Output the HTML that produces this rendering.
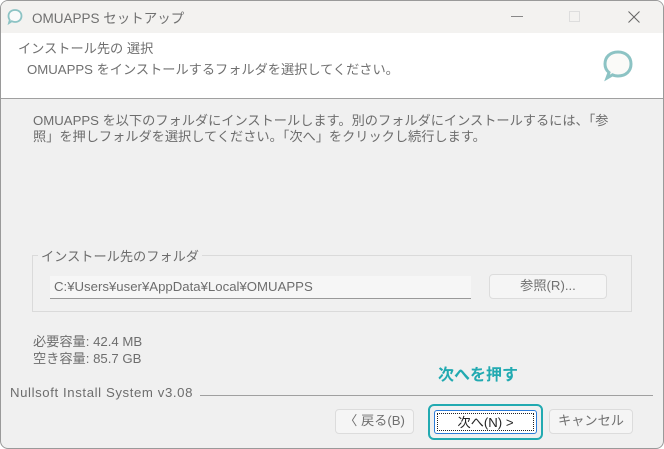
<!DOCTYPE html>
<html><head><meta charset="utf-8"><style>
*{margin:0;padding:0;box-sizing:border-box}
body{width:664px;height:449px;overflow:hidden;background:#fff;font-family:"Liberation Sans","Noto Sans CJK JP",sans-serif;font-size:13.2px;color:#6d6d6d;position:relative}
.win{position:absolute;left:0;top:0;width:664px;height:449px;border:1px solid #9a9a9a;border-radius:8px;overflow:hidden;background:#f0f0f0}
.title{position:absolute;left:0;top:0;width:664px;height:32px;background:#f3f2f0}
.hdr{position:absolute;left:0;top:32px;width:664px;height:66px;background:#fff;border-bottom:1px solid #a0a0a0}
.a{position:absolute;white-space:nowrap}
.btn{position:absolute;background:#f5f5f5;border:1px solid #dcdcdc;border-radius:4px;text-align:center;line-height:22px;color:#707070}
</style></head><body><div class="win">
<div class="title">
<svg class="a" style="left:4px;top:6px" width="20" height="20" viewBox="0 0 20 20"><path d="M10 3c4 0 6.5 2.6 6.5 6s-2.5 6-6.5 6c-1.2 0-2.3-.3-3.3-.8L4 16l.8-3C4 12 3.5 10.6 3.5 9 3.5 5.6 6 3 10 3z" fill="#fafafa" stroke="#8cc3c4" stroke-width="1.8"/></svg>
<div class="a" style="left:31px;top:6px;font-size:13.5px;color:#707070">OMUAPPS セットアップ</div>
<div class="a" style="left:510px;top:15px;width:12px;height:1px;background:#888"></div>
<div class="a" style="left:568px;top:10px;width:11px;height:11px;border:1px solid #ddd"></div>
<svg class="a" style="left:627px;top:10px" width="12" height="12" viewBox="0 0 12 12"><path d="M0.5 0.5L11.5 11.5M11.5 0.5L0.5 11.5" stroke="#666" stroke-width="1"/></svg>
</div>
<div class="hdr">
<div class="a" style="left:17px;top:5px;color:#707070">インストール先の 選択</div>
<div class="a" style="left:26px;top:26px;color:#707070">OMUAPPS をインストールするフォルダを選択してください。</div>
<svg class="a" style="left:597px;top:14px" width="40" height="40" viewBox="0 0 40 40"><path d="M20 5c8 0 13 5 13 12s-5 12-13 12c-2 0-4-.4-5.5-1.2L9 31l2-5.5C8.5 23.5 7 20.5 7 17 7 10 12 5 20 5z" fill="#fafaf8" stroke="#8cc3c4" stroke-width="3"/></svg>
</div>
<div class="a" style="left:32px;top:112px;line-height:16px">OMUAPPS を以下のフォルダにインストールします。別のフォルダにインストールするには、「参<br>照」を押しフォルダを選択してください。「次へ」をクリックし続行します。</div>
<div class="a" style="left:31px;top:254px;width:600px;height:57px;border:1px solid #dadada"></div>
<div class="a" style="left:37px;top:245px;background:#f0f0f0;padding:0 3px">インストール先のフォルダ</div>
<div class="a" style="left:49px;top:275px;width:421px;height:23px;background:#f6f6f6;border-bottom:1px solid #999;padding-left:4px;line-height:21px">C:¥Users¥user¥AppData¥Local¥OMUAPPS</div>
<div class="btn" style="left:488px;top:273px;width:118px;height:25px">参照(R)...</div>
<div class="a" style="left:32px;top:330px">必要容量: 42.4 MB</div>
<div class="a" style="left:32px;top:347px">空き容量: 85.7 GB</div>
<div class="a" style="left:437px;top:360px;font-size:16px;font-weight:bold;color:#22aab1">次へを押す</div>
<div class="a" style="left:9px;top:384px;letter-spacing:0.6px">Nullsoft Install System v3.08</div>
<div class="a" style="left:199px;top:394px;width:453px;height:1px;background:#a0a0a0"></div>
<div class="btn" style="left:334px;top:408px;width:79px;height:25px">〈 戻る(B)</div>
<div class="a" style="left:427px;top:403px;width:115px;height:36px;border:2px solid #22aab1;border-radius:6px"></div>
<div class="a" style="left:433px;top:409px;width:103px;height:24px;background:#fff;border:1px solid #2a7bd8;border-radius:3px"><div style="margin:2px;height:18px;border:1px dotted #222;text-align:center;line-height:17px;color:#222">次へ(N) &gt;</div></div>
<div class="btn" style="left:548px;top:408px;width:84px;height:25px">キャンセル</div>
</div></body></html>
